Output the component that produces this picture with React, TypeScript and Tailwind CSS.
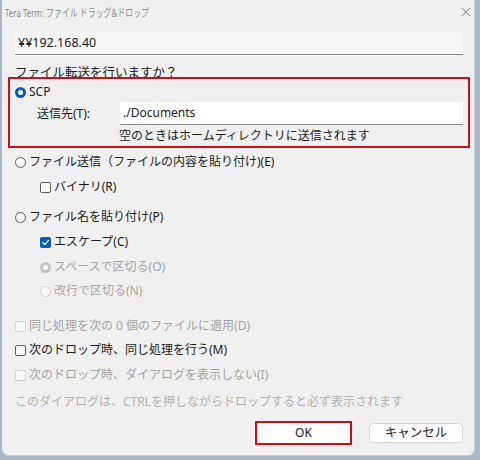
const font = { fontFamily: '"Noto Sans", "Noto Sans CJK JP", sans-serif' };

const Radio = ({ on, disabled }: { on?: boolean; disabled?: boolean }) => {
  if (on) {
    return (
      <span
        className={`w-[11px] h-[11px] rounded-full flex items-center justify-center shrink-0 ${
          disabled ? "bg-[#c4c4c4]" : "bg-[#005fb8]"
        }`}
      >
        <span className="w-[5px] h-[5px] rounded-full bg-white" />
      </span>
    );
  }
  return (
    <span
      className={`w-[11px] h-[11px] rounded-full border shrink-0 bg-[#f8f8f8] ${
        disabled ? "border-[#cfcfcf]" : "border-[#5c5c5c]"
      }`}
    />
  );
};

const Check = ({ on, disabled }: { on?: boolean; disabled?: boolean }) => {
  if (on) {
    return (
      <span className="w-[11px] h-[11px] rounded-[2px] bg-[#005fb8] flex items-center justify-center shrink-0">
        <svg width="9" height="9" viewBox="0 0 10 10" fill="none">
          <path d="M2 5.2 L4.2 7.3 L8.2 2.8" stroke="white" strokeWidth="1.4" strokeLinecap="round" strokeLinejoin="round" />
        </svg>
      </span>
    );
  }
  return (
    <span
      className={`w-[11px] h-[11px] rounded-[2px] border shrink-0 bg-[#f8f8f8] ${
        disabled ? "border-[#d2d2d2]" : "border-[#5c5c5c]"
      }`}
    />
  );
};

const Row = ({
  mt,
  indent,
  children,
  disabled,
}: {
  mt: string;
  indent?: boolean;
  children: React.ReactNode;
  disabled?: boolean;
}) => (
  <div
    className={`flex items-center gap-[3px] h-[24px] ${mt} ${indent ? "pl-[38px]" : "pl-[13px]"} ${
      disabled ? "text-[#a3a3a3]" : "text-[#1b1b1b]"
    }`}
  >
    {children}
  </div>
);

export default function App() {
  return (
    <div className="w-[480px] h-[460px] bg-[#a9b8c8] pl-[2px] pr-[5px] pb-[4px]" style={font}>
      <div className="h-full bg-[#f0f0f0] rounded-b-[7px] border-r border-b border-[#c9ced6] flex flex-col text-[12px] leading-none">
        {/* title bar */}
        <div className="h-[24px] flex items-center justify-between pl-[3px] pr-[3px]">
          <span className="text-[11px] text-[#8c8c8c] whitespace-nowrap origin-left scale-x-[0.72]">
            Tera Term: ファイル ドラッグ&amp;ドロップ
          </span>
          <svg width="10" height="10" viewBox="0 0 10 10">
            <path d="M0.8 0.8 L9.2 9.2 M9.2 0.8 L0.8 9.2" stroke="#9a9a9a" strokeWidth="1.1" />
          </svg>
        </div>

        {/* host field */}
        <div className="mt-[8px] ml-[13px] mr-[11px] h-[23px] bg-[#f6f6f6] border-b border-[#8a8a8a] flex items-center pl-[3px] text-[#1b1b1b] text-[12.5px]">
          ¥¥192.168.40
        </div>

        <div className="h-[18px] mt-[9px] pl-[13px] flex items-center text-[#1b1b1b] text-[12.5px]">
          ファイル転送を行いますか？
        </div>

        {/* SCP group (highlighted) */}
        <div className="relative ml-[6px] mr-[4px] -mt-[5px] h-[71px] border-2 border-[#c8101a] bg-[#f0f0f0] flex flex-col">
          <div className="h-[23px] pl-[5px] pt-[3px] flex items-center gap-[3px] text-[#1b1b1b]">
            <Radio on />
            <span>SCP</span>
          </div>
          <div className="h-[23px] flex items-center text-[#1b1b1b]">
            <span className="w-[110px] pl-[27px]">送信先(T):</span>
            <div className="flex-1 mr-[5px] h-full bg-white border-b border-[#8a8a8a] flex items-center pl-[3px]">
              ./Documents
            </div>
          </div>
          <div className="flex-1 pl-[109px] flex items-center text-[#1b1b1b]">
            空のときはホームディレクトリに送信されます
          </div>
        </div>

        <Row mt="mt-[2px]">
          <Radio />
          <span>ファイル送信（ファイルの内容を貼り付け)(E)</span>
        </Row>
        <Row mt="mt-[1px]" indent>
          <Check />
          <span>バイナリ(R)</span>
        </Row>
        <Row mt="mt-[6px]">
          <Radio />
          <span>ファイル名を貼り付け(P)</span>
        </Row>
        <Row mt="mt-[1px]" indent>
          <Check on />
          <span>エスケープ(C)</span>
        </Row>
        <Row mt="mt-[1px]" indent disabled>
          <Radio on disabled />
          <span>スペースで区切る(O)</span>
        </Row>
        <Row mt="mt-0" indent disabled>
          <Radio disabled />
          <span>改行で区切る(N)</span>
        </Row>

        <Row mt="mt-[11px]" disabled>
          <Check disabled />
          <span>同じ処理を次の 0 個のファイルに適用(D)</span>
        </Row>
        <Row mt="mt-0">
          <Check />
          <span>次のドロップ時、同じ処理を行う(M)</span>
        </Row>
        <Row mt="mt-[1px]" disabled>
          <Check disabled />
          <span>次のドロップ時、ダイアログを表示しない(I)</span>
        </Row>
        <div className="h-[24px] mt-[3px] pl-[13px] flex items-center text-[#b0b0b0]">
          このダイアログは、CTRLを押しながらドロップすると必ず表示されます
        </div>

        {/* buttons */}
        <div className="mt-[7px] flex justify-end gap-[17px] pr-[11px]">
          <div className="w-[97px] h-[24px] border-2 border-[#c8101a] bg-white flex items-center justify-center text-[#1b1b1b]">
            OK
          </div>
          <div className="w-[94px] h-[20px] mt-[2px] rounded-[4px] border border-[#d4d4d4] bg-[#fdfdfd] flex items-center justify-center text-[#1b1b1b] text-[12.5px]">
            キャンセル
          </div>
        </div>
      </div>
    </div>
  );
}
